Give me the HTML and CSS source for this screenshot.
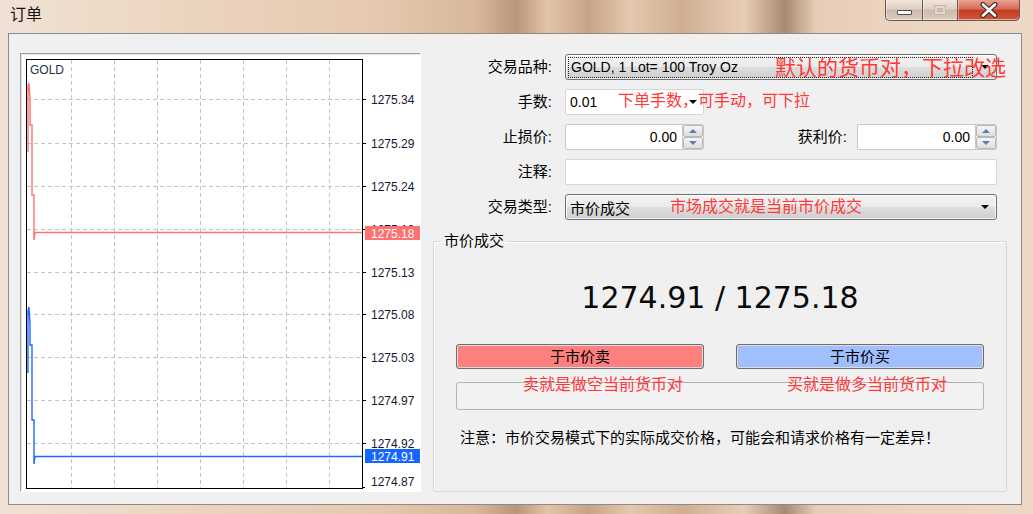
FILE: index.html
```html
<!DOCTYPE html>
<html lang="zh">

<head>
    <meta charset="UTF-8">
    <meta name="viewport" content="width=device-width, initial-scale=1.0">
    <title>订单</title>
    <link rel="stylesheet" href="styles.css">
</head>

<body>
    <div class="window">
        <div class="titlebar">
            <span class="title">订单</span>
            <div class="caption">
                <span class="cap-btn cap-min"><i></i></span>
                <span class="cap-btn cap-max"><i></i></span>
                <span class="cap-btn cap-close">
                    <svg width="20" height="16" viewBox="0 0 20 16">
                        <path d="M4 2.5l12 11M16 2.5l-12 11" stroke="#3b2f2a" stroke-width="5" stroke-linecap="round" />
                        <path d="M4 2.5l12 11M16 2.5l-12 11" stroke="#fff" stroke-width="2.6" stroke-linecap="round" />
                    </svg>
                </span>
            </div>
        </div>

        <div class="client">
            <!-- tick chart -->
            <div class="chart">
                <svg class="plot" width="399" height="437" viewBox="0 0 399 437">
                    <defs>
                        <clipPath id="above-tag">
                            <rect x="340" y="0" width="59" height="172" />
                        </clipPath>
                    </defs>
                    <path class="grid" d="M50.5 6V434M93.5 6V434M136.5 6V434M179.5 6V434M222.5 6V434M265.5 6V434M308.5 6V434" />
                    <path class="grid" d="M6 45.5H341M6 89.5H341M6 132.5H341M6 175.5H341M6 218.5H341M6 260.5H341M6 303.5H341M6 346.5H341M6 389.5H341" />
                    <path class="ticks" d="M341 45.5h4M341 89.5h4M341 132.5h4M341 175.5h4M341 218.5h4M341 260.5h4M341 303.5h4M341 346.5h4M341 389.5h4M341 433.5h3" />
                    <rect class="frame" x="5.5" y="5.5" width="336" height="429" />
                    <text class="sym" x="9" y="20">GOLD</text>
                    <g class="axis">
                        <text x="350" y="49.5">1275.34</text>
                        <text x="350" y="93.5">1275.29</text>
                        <text x="350" y="136.5">1275.24</text>
                        <text x="350" y="179.5" clip-path="url(#above-tag)">1275.19</text>
                        <text x="350" y="222.5">1275.13</text>
                        <text x="350" y="264.5">1275.08</text>
                        <text x="350" y="307.5">1275.03</text>
                        <text x="350" y="350.5">1274.97</text>
                        <text x="350" y="393.5">1274.92</text>
                        <text x="350" y="432">1274.87</text>
                    </g>
                    <path class="ask" d="M7 98V32L8 29L9 46V71H11V141H13V186L14 178.5H341" />
                    <path class="bid" d="M7 319V257L8 253L9 270V291H11V366H13V410L14 402.5H341" />
                    <rect class="ask-tag" x="344" y="172" width="55" height="14" />
                    <text class="tag-text" x="350" y="183.5">1275.18</text>
                    <rect class="bid-tag" x="344" y="395" width="55" height="14" />
                    <text class="tag-text" x="350" y="406.5">1274.91</text>
                </svg>
            </div>

            <div class="order">
                <div class="form">
                    <label>交易品种:</label>
                    <div class="combo">
                        <span class="focus">GOLD, 1 Lot= 100 Troy Oz</span>
                        <span class="arrow"></span>
                        <span class="hint hint-symbol">默认的货币对，下拉改选</span>
                    </div>

                    <label>手数:</label>
                    <div class="row">
                        <div class="field lot">
                            <span>0.01</span>
                            <span class="arrow"></span>
                            <span class="hint hint-lot">下单手数，可手动，可下拉</span>
                        </div>
                    </div>

                    <label>止损价:</label>
                    <div class="row">
                        <div class="spin">
                            <span class="spin-value">0.00</span>
                            <span class="spin-btns"><b class="up"></b><b class="down"></b></span>
                        </div>
                        <label class="inline">获利价:</label>
                        <div class="spin spin-tp">
                            <span class="spin-value">0.00</span>
                            <span class="spin-btns"><b class="up"></b><b class="down"></b></span>
                        </div>
                    </div>

                    <label>注释:</label>
                    <div class="field"></div>

                    <label>交易类型:</label>
                    <div class="combo combo-type">
                        <span class="combo-text">市价成交</span>
                        <span class="arrow"></span>
                        <span class="hint hint-type">市场成交就是当前市价成交</span>
                    </div>
                </div>

                <fieldset class="market">
                    <legend>市价成交</legend>
                    <div class="quote">1274.91 / 1275.18</div>
                    <div class="actions">
                        <button class="btn btn-sell">于市价卖</button>
                        <button class="btn btn-buy">于市价买</button>
                    </div>
                    <div class="status">
                        <span class="hint hint-sell">卖就是做空当前货币对</span>
                        <span class="hint hint-buy">买就是做多当前货币对</span>
                    </div>
                    <p class="warning">注意：市价交易模式下的实际成交价格，可能会和请求价格有一定差异！</p>
                </fieldset>
            </div>
        </div>
    </div>
</body>

</html>
```

FILE: styles.css
```css
* {
    margin: 0;
    padding: 0;
    box-sizing: border-box;
}

body {
    width: 1033px;
    height: 514px;
    overflow: hidden;
    font-family: "Liberation Sans", "Noto Sans CJK SC", sans-serif;
    color: #000;
}

.window {
    width: 1033px;
    height: 514px;
    display: flex;
    flex-direction: column;
    background:
        linear-gradient(90deg, #f0e2d4 0%, #ebd5c0 18%, #e6c9b0 36%, #d8b89c 46%, #b9967a 50%, #e2c4aa 53%, #c6a489 57%, #e4c8ae 61%, #cfae93 66%, #e8cdb5 72%, #a88a74 76%, #e7cdb6 79%, #ecd5c0 88%, #eed9c6 100%);
}

/* title bar */
.titlebar {
    height: 33px;
    display: flex;
    align-items: flex-start;
    flex: none;
}

.title {
    margin: 5px 0 0 10px;
    font-size: 16px;
    line-height: 20px;
    color: #151515;
}

.caption {
    margin-left: auto;
    margin-right: 13px;
    display: flex;
    height: 21px;
}

.cap-btn {
    display: flex;
    align-items: center;
    justify-content: center;
    height: 21px;
    border: 1px solid #6a5850;
    border-top: none;
    background: linear-gradient(#f2e6dc, #e0cfc3 45%, #cdb9ab 50%, #dccbbf);
    box-shadow: inset 0 -1px 0 rgba(255, 255, 255, .5), inset 1px 0 0 rgba(255, 255, 255, .4);
}

.cap-min {
    width: 38px;
    border-radius: 0 0 0 5px;
}

.cap-min i {
    width: 15px;
    height: 5px;
    margin-top: 5px;
    background: #fff;
    border: 1px solid #4a4a52;
    border-radius: 1px;
}

.cap-max {
    width: 35px;
    border-left: none;
}

.cap-max i {
    width: 12px;
    height: 10px;
    border: 1px solid #c6b4a8;
    box-shadow: inset 0 0 0 2px #e6d9cf, inset 0 0 0 3px #c6b4a8;
}

.cap-close {
    width: 62px;
    border-left: none;
    border-radius: 0 0 5px 0;
    background: linear-gradient(#e8a291, #d86a52 45%, #c63c22 52%, #d2563a);
}

/* client area */
.client {
    flex: none;
    height: 472px;
    margin: 0 11px 0 8px;
    border: 1px solid #8b8b8b;
    background: #f0f0f0;
    display: flex;
    padding: 19px 0 0 11px;
}

.chart {
    flex: none;
    width: 401px;
    height: 439px;
    border: 1px solid;
    border-color: #a0a0a0 #fff #fff #a0a0a0;
    box-shadow: inset 1px 1px 0 #e3e3e3;
    background: #fff;
}

.plot {
    display: block;
    font-family: "Liberation Sans", sans-serif;
    font-size: 12px;
}

.grid {
    fill: none;
    stroke: #c4c4c4;
    stroke-dasharray: 4 3;
}

.ticks,
.frame {
    fill: none;
    stroke: #000;
}

.sym {
    fill: #23304a;
}

.axis text {
    fill: #111a33;
}

.ask,
.bid {
    fill: none;
    stroke-width: 1.4;
}

.ask {
    stroke: #ff7272;
}

.bid {
    stroke: #1e6cff;
}

.ask-tag {
    fill: #ff7070;
}

.bid-tag {
    fill: #1565ff;
}

.tag-text {
    fill: #fff;
}

/* order form */
.order {
    flex: none;
    width: 574px;
    margin-left: 12px;
}

.form {
    margin-top: 1px;
    display: grid;
    grid-template-columns: 119px 432px;
    grid-auto-rows: 26px;
    column-gap: 13px;
    row-gap: 9px;
    font-size: 15px;
}

.form label {
    text-align: right;
    line-height: 26px;
    white-space: nowrap;
}

.row {
    display: flex;
}

.inline {
    flex: 1;
    padding-right: 10px;
}

.combo {
    position: relative;
    display: flex;
    align-items: center;
    height: 26px;
    border: 1px solid #707070;
    border-radius: 3px;
    background: linear-gradient(#f3f3f3, #ebebeb 48%, #dddddd 52%, #cfcfcf);
    box-shadow: inset 0 0 0 1px rgba(255, 255, 255, .7);
    font-size: 14px;
}

.focus {
    flex: 1;
    height: 21px;
    margin-left: 2px;
    padding-left: 2px;
    line-height: 19px;
    border: 1px dotted #222;
    white-space: nowrap;
}

.arrow {
    flex: none;
    width: 0;
    height: 0;
    margin: 0 7px 0 8px;
    border-left: 4px solid transparent;
    border-right: 4px solid transparent;
    border-top: 4px solid #000;
}

.combo-text {
    flex: 1;
    padding-left: 4px;
    font-size: 15px;
}

.field {
    position: relative;
    height: 26px;
    border: 1px solid #d6d6d6;
    border-radius: 2px;
    background: #fff;
}

.lot {
    width: 139px;
    display: flex;
    align-items: center;
    font-size: 14px;
    padding-left: 4px;
}

.lot span:first-child {
    flex: 1;
}

.lot .arrow {
    margin: 0 6px 0 0;
}

.spin {
    display: flex;
    width: 139px;
    height: 26px;
    border: 1px solid #c9c9c9;
    border-radius: 2px;
    background: #fff;
}

.spin-tp {
    width: 140px;
}

.spin-value {
    flex: 1;
    text-align: right;
    padding-right: 5px;
    font-size: 14px;
    line-height: 24px;
}

.spin-btns {
    width: 21px;
    display: flex;
    flex-direction: column;
    border-left: 1px solid #c9c9c9;
}

.spin-btns b {
    flex: 1;
    display: flex;
    align-items: center;
    justify-content: center;
    border: 1px solid #b8b8b8;
    border-radius: 2px;
    background: linear-gradient(#f6f6f6, #dedede);
}

.spin-btns b::after {
    content: "";
    width: 0;
    height: 0;
    border-left: 4px solid transparent;
    border-right: 4px solid transparent;
}

.spin-btns .up::after {
    border-bottom: 4px solid #5b7fae;
}

.spin-btns .down::after {
    border-top: 4px solid #5b7fae;
}

/* red annotations drawn over the dialog */
.hint {
    position: absolute;
    color: #ff3838;
    white-space: nowrap;
    font-size: 16px;
    line-height: 20px;
}

.hint-symbol {
    left: 209px;
    top: 1px;
    font-size: 21px;
    line-height: 24px;
}

.hint-lot {
    left: 52px;
    top: 1px;
}

.hint-type {
    left: 104px;
    top: 2px;
}

/* market execution group */
.market {
    margin-top: 11px;
    height: 261px;
    padding: 29px 22px 0;
    border: 1px solid #d2d9de;
    border-radius: 3px;
    box-shadow: inset 1px 1px 0 #fff;
    min-width: 0;
}

.market legend {
    margin-left: -15px;
    padding: 0 3px;
    font-size: 15px;
    line-height: 20px;
}

.quote {
    text-align: center;
    font-family: "DejaVu Sans", sans-serif;
    font-size: 30px;
    line-height: 36px;
    color: #0a0a0a;
}

.actions {
    margin-top: 28px;
    display: flex;
    justify-content: space-between;
}

.btn {
    width: 248px;
    height: 25px;
    border: 1px solid #6f6f6f;
    border-radius: 3px;
    box-shadow: inset 0 0 0 1px #dcdcdc;
    font-family: "Liberation Sans", "Noto Sans CJK SC", sans-serif;
    font-size: 15px;
    line-height: 21px;
    color: #000;
}

.btn-sell {
    background: #ff7f7f;
}

.btn-buy {
    background: #a0bfff;
}

.status {
    position: relative;
    margin-top: 13px;
    height: 28px;
    border: 1px solid #b4b4b4;
    border-radius: 3px;
    background: #f2f2f2;
}

.hint-sell {
    left: 66px;
    top: -8px;
}

.hint-buy {
    left: 330px;
    top: -8px;
}

.warning {
    margin: 18px 0 0 4px;
    font-size: 15px;
    line-height: 20px;
    white-space: nowrap;
}
```
